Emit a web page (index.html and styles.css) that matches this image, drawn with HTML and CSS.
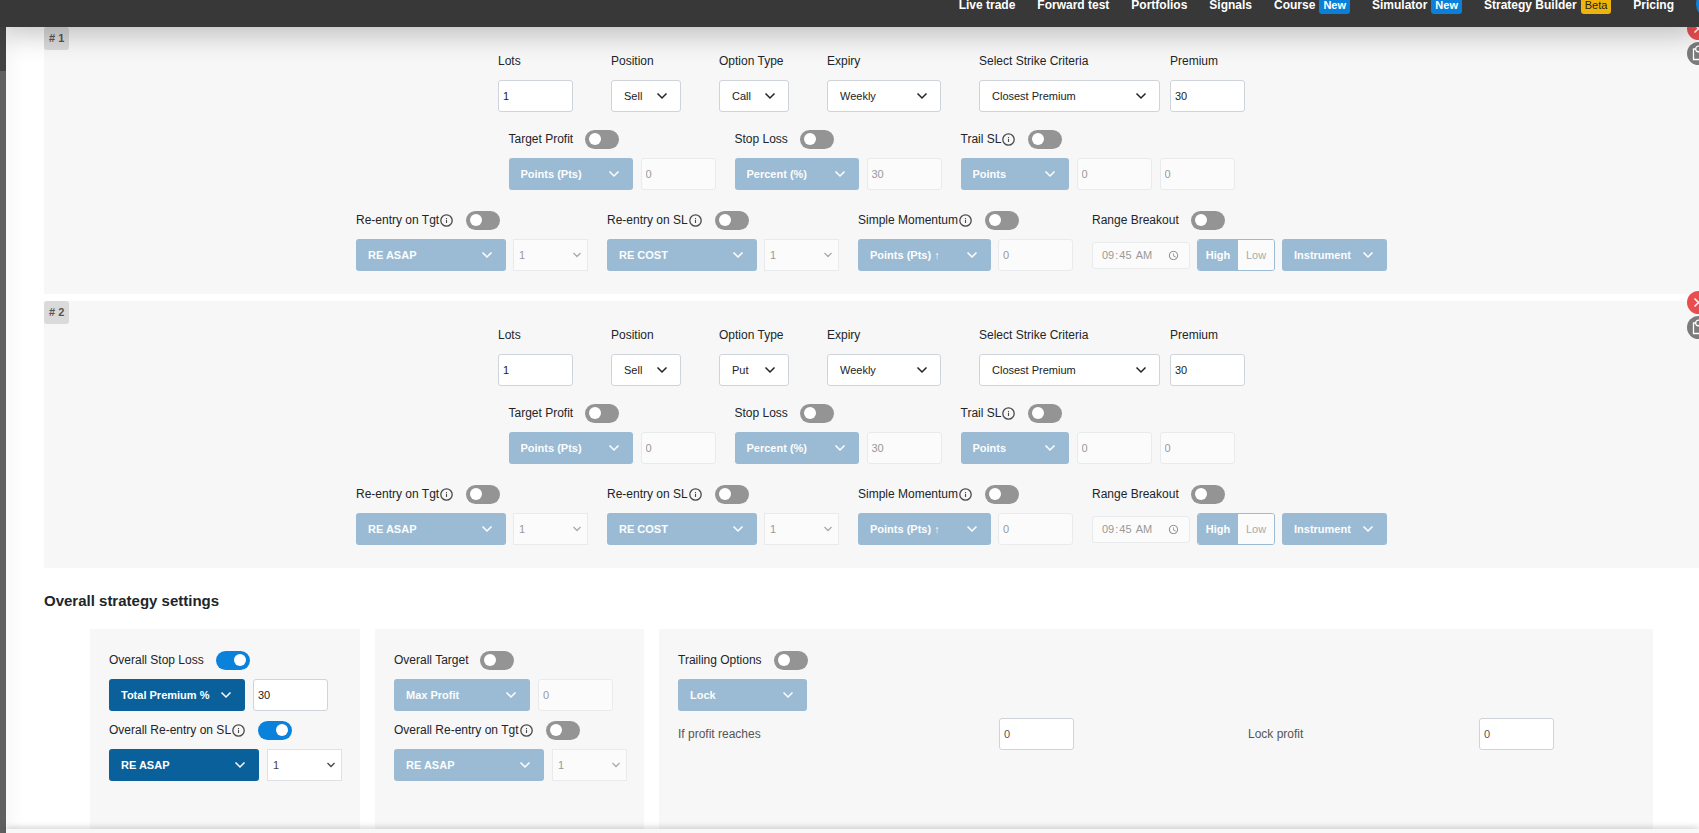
FILE: index.html
```html
<!DOCTYPE html>
<html lang="en">
<head>
<meta charset="utf-8">
<title>Strategy legs</title>
<link rel="stylesheet" href="styles.css">
</head>
<body>
<svg width="0" height="0" class="defs" aria-hidden="true">
  <symbol id="info" viewBox="0 0 13 13"><circle cx="6.5" cy="6.5" r="5.7" fill="none" stroke="#4a4a4a" stroke-width="1.3"/><path d="M6.5 5.8v3.2M6.5 3.9v1.1" stroke="#4a4a4a" stroke-width="1.1"/></symbol>
  <symbol id="cross" viewBox="0 0 23 23"><path d="M7.5 7.5l8 8M15.5 7.5l-8 8" stroke="#fff" stroke-width="1.5"/></symbol>
  <symbol id="copy" viewBox="0 0 23 23"><path d="M9 7H6.5v10.500h10V7H14" fill="none" stroke="#fff" stroke-width="1.3"/><circle cx="11.500" cy="7" r="2.800" fill="none" stroke="#fff" stroke-width="1.200"/><path d="M9.500 9.500h4" stroke="#fff" stroke-width="1.200"/></symbol>
</svg>
<header class="topbar">
  <nav class="nav">
    <a href="#">Live trade</a>
    <a href="#">Forward test</a>
    <a href="#">Portfolios</a>
    <a href="#">Signals</a>
    <a href="#">Course <span class="tag">New</span></a>
    <a href="#">Simulator <span class="tag">New</span></a>
    <a href="#">Strategy Builder <span class="tag beta">Beta</span></a>
    <a href="#">Pricing</a>
    <button class="avatar" aria-label="Account"></button>
  </nav>
</header>
<div class="shell">
  <aside class="backdrop"></aside>
  <main class="page">
    <section class="leg">
      <span class="number"># 1</span>
      <div class="actions"><button class="round remove" aria-label="Remove leg"><svg><use href="#cross"/></svg></button><button class="round" aria-label="Copy leg"><svg><use href="#copy"/></svg></button></div>
      <div class="row main-row">
        <div class="field"><label for="lots1">Lots</label><input class="box" id="lots1" value="1"></div>
        <div class="field"><label for="pos1">Position</label><select class="pick w-s" id="pos1"><option>Sell</option></select></div>
        <div class="field"><label for="opt1">Option Type</label><select class="pick w-s" id="opt1"><option>Call</option></select></div>
        <div class="field"><label for="exp1">Expiry</label><select class="pick w-m" id="exp1"><option>Weekly</option></select></div>
        <div class="pair">
          <div class="field"><label for="crit1">Select Strike Criteria</label><select class="pick w-l" id="crit1"><option>Closest Premium</option></select></div>
          <div class="field"><label for="prem1">Premium</label><input class="box" id="prem1" value="30"></div>
        </div>
      </div>
      <div class="row target-row">
        <div class="group"><div class="head"><label for="tp1">Target Profit</label><input type="checkbox" class="toggle" id="tp1"></div>
          <div class="controls"><select class="pick blue w-124" aria-label="Target unit" disabled><option>Points (Pts)</option></select><input class="box" aria-label="Target value" value="0" disabled></div></div>
        <div class="group"><div class="head"><label for="sl1">Stop Loss</label><input type="checkbox" class="toggle" id="sl1"></div>
          <div class="controls"><select class="pick blue w-124" aria-label="Stop loss unit" disabled><option>Percent (%)</option></select><input class="box" aria-label="Stop loss value" value="30" disabled></div></div>
        <div class="group"><div class="head"><label for="tsl1">Trail SL<svg class="info"><use href="#info"/></svg></label><input type="checkbox" class="toggle" id="tsl1"></div>
          <div class="controls"><select class="pick blue w-108" aria-label="Trail unit" disabled><option>Points</option></select><input class="box" aria-label="Trail move" value="0" disabled><input class="box" aria-label="Trail step" value="0" disabled></div></div>
      </div>
      <div class="row entry-row">
        <div class="group"><div class="head"><label for="rt1">Re-entry on Tgt<svg class="info"><use href="#info"/></svg></label><input type="checkbox" class="toggle" id="rt1"></div>
          <div class="controls"><select class="pick blue w-150" aria-label="Re-entry mode" disabled><option>RE ASAP</option></select><select class="count" aria-label="Re-entry count" disabled><option>1</option></select></div></div>
        <div class="group"><div class="head"><label for="rs1">Re-entry on SL<svg class="info"><use href="#info"/></svg></label><input type="checkbox" class="toggle" id="rs1"></div>
          <div class="controls"><select class="pick blue w-150" aria-label="SL re-entry mode" disabled><option>RE COST</option></select><select class="count" aria-label="SL re-entry count" disabled><option>1</option></select></div></div>
        <div class="group"><div class="head"><label for="sm1">Simple Momentum<svg class="info"><use href="#info"/></svg></label><input type="checkbox" class="toggle" id="sm1"></div>
          <div class="controls"><select class="pick blue w-133" aria-label="Momentum unit" disabled><option>Points (Pts) ↑</option></select><input class="box" aria-label="Momentum value" value="0" disabled></div></div>
        <div class="group"><div class="head"><label for="rb1">Range Breakout</label><input type="checkbox" class="toggle" id="rb1"></div>
          <div class="controls"><input type="time" class="time" aria-label="Range end time" value="09:45" disabled><div class="segment"><button class="active" disabled>High</button><button disabled>Low</button></div><select class="pick blue w-105" aria-label="Breakout source" disabled><option>Instrument</option></select></div></div>
      </div>
    </section>
    <section class="leg">
      <span class="number"># 2</span>
      <div class="actions"><button class="round remove" aria-label="Remove leg"><svg><use href="#cross"/></svg></button><button class="round" aria-label="Copy leg"><svg><use href="#copy"/></svg></button></div>
      <div class="row main-row">
        <div class="field"><label for="lots2">Lots</label><input class="box" id="lots2" value="1"></div>
        <div class="field"><label for="pos2">Position</label><select class="pick w-s" id="pos2"><option>Sell</option></select></div>
        <div class="field"><label for="opt2">Option Type</label><select class="pick w-s" id="opt2"><option>Put</option></select></div>
        <div class="field"><label for="exp2">Expiry</label><select class="pick w-m" id="exp2"><option>Weekly</option></select></div>
        <div class="pair">
          <div class="field"><label for="crit2">Select Strike Criteria</label><select class="pick w-l" id="crit2"><option>Closest Premium</option></select></div>
          <div class="field"><label for="prem2">Premium</label><input class="box" id="prem2" value="30"></div>
        </div>
      </div>
      <div class="row target-row">
        <div class="group"><div class="head"><label for="tp2">Target Profit</label><input type="checkbox" class="toggle" id="tp2"></div>
          <div class="controls"><select class="pick blue w-124" aria-label="Target unit" disabled><option>Points (Pts)</option></select><input class="box" aria-label="Target value" value="0" disabled></div></div>
        <div class="group"><div class="head"><label for="sl2">Stop Loss</label><input type="checkbox" class="toggle" id="sl2"></div>
          <div class="controls"><select class="pick blue w-124" aria-label="Stop loss unit" disabled><option>Percent (%)</option></select><input class="box" aria-label="Stop loss value" value="30" disabled></div></div>
        <div class="group"><div class="head"><label for="tsl2">Trail SL<svg class="info"><use href="#info"/></svg></label><input type="checkbox" class="toggle" id="tsl2"></div>
          <div class="controls"><select class="pick blue w-108" aria-label="Trail unit" disabled><option>Points</option></select><input class="box" aria-label="Trail move" value="0" disabled><input class="box" aria-label="Trail step" value="0" disabled></div></div>
      </div>
      <div class="row entry-row">
        <div class="group"><div class="head"><label for="rt2">Re-entry on Tgt<svg class="info"><use href="#info"/></svg></label><input type="checkbox" class="toggle" id="rt2"></div>
          <div class="controls"><select class="pick blue w-150" aria-label="Re-entry mode" disabled><option>RE ASAP</option></select><select class="count" aria-label="Re-entry count" disabled><option>1</option></select></div></div>
        <div class="group"><div class="head"><label for="rs2">Re-entry on SL<svg class="info"><use href="#info"/></svg></label><input type="checkbox" class="toggle" id="rs2"></div>
          <div class="controls"><select class="pick blue w-150" aria-label="SL re-entry mode" disabled><option>RE COST</option></select><select class="count" aria-label="SL re-entry count" disabled><option>1</option></select></div></div>
        <div class="group"><div class="head"><label for="sm2">Simple Momentum<svg class="info"><use href="#info"/></svg></label><input type="checkbox" class="toggle" id="sm2"></div>
          <div class="controls"><select class="pick blue w-133" aria-label="Momentum unit" disabled><option>Points (Pts) ↑</option></select><input class="box" aria-label="Momentum value" value="0" disabled></div></div>
        <div class="group"><div class="head"><label for="rb2">Range Breakout</label><input type="checkbox" class="toggle" id="rb2"></div>
          <div class="controls"><input type="time" class="time" aria-label="Range end time" value="09:45" disabled><div class="segment"><button class="active" disabled>High</button><button disabled>Low</button></div><select class="pick blue w-105" aria-label="Breakout source" disabled><option>Instrument</option></select></div></div>
      </div>
    </section>
    <h2 class="title">Overall strategy settings</h2>
    <div class="cards">
      <section class="card">
        <div class="group"><div class="head"><label for="osl">Overall Stop Loss</label><input type="checkbox" class="toggle" id="osl" checked></div>
          <div class="controls"><select class="pick blue w-136" aria-label="Overall stop loss unit"><option>Total Premium %</option></select><input class="box" aria-label="Overall stop loss value" value="30"></div></div>
        <div class="group"><div class="head"><label for="ors">Overall Re-entry on SL<svg class="info"><use href="#info"/></svg></label><input type="checkbox" class="toggle" id="ors" checked></div>
          <div class="controls"><select class="pick blue w-150" aria-label="Overall SL re-entry mode"><option>RE ASAP</option></select><select class="count" aria-label="Overall SL re-entry count"><option>1</option></select></div></div>
      </section>
      <section class="card">
        <div class="group"><div class="head"><label for="ot">Overall Target</label><input type="checkbox" class="toggle" id="ot"></div>
          <div class="controls"><select class="pick blue w-136" aria-label="Overall target unit" disabled><option>Max Profit</option></select><input class="box" aria-label="Overall target value" value="0" disabled></div></div>
        <div class="group"><div class="head"><label for="ort">Overall Re-entry on Tgt<svg class="info"><use href="#info"/></svg></label><input type="checkbox" class="toggle" id="ort"></div>
          <div class="controls"><select class="pick blue w-150" aria-label="Overall target re-entry mode" disabled><option>RE ASAP</option></select><select class="count" aria-label="Overall target re-entry count" disabled><option>1</option></select></div></div>
      </section>
      <section class="card wide">
        <div class="group"><div class="head"><label for="tro">Trailing Options</label><input type="checkbox" class="toggle" id="tro"></div>
          <div class="controls"><select class="pick blue w-129" aria-label="Trailing mode" disabled><option>Lock</option></select></div></div>
        <div class="lock"><label for="reach">If profit reaches</label><input class="box" id="reach" value="0"><label for="lockp">Lock profit</label><input class="box" id="lockp" value="0"></div>
      </section>
    </div>
    <footer class="bottombar"></footer>
  </main>
</div>
</body>
</html>
```
FILE: styles.css
```css
* { box-sizing: border-box; }
body {
  margin: 0;
  height: 100vh;
  overflow: hidden;
  display: flex;
  flex-direction: column;
  font: 12px/20px "Liberation Sans", Arial, sans-serif;
  color: #212529;
  background: #fff;
}
button, input, select { font: 11px/16px "Liberation Sans", Arial, sans-serif; margin: 0; }
.defs { position: absolute; }

.topbar {
  position: relative;
  z-index: 2;
  flex: none;
  height: 27px;
  background: #383838;
  box-shadow: 0 4px 30px rgba(0, 0, 0, .3);
}
.nav {
  height: 100%;
  overflow: hidden;
  display: flex;
  justify-content: flex-end;
  align-items: flex-start;
  gap: 22px;
}
.nav a {
  margin-top: -4px;
  display: flex;
  align-items: center;
  gap: 4px;
  color: #fff;
  font-weight: bold;
  line-height: 18px;
  text-decoration: none;
  white-space: nowrap;
}
.tag {
  padding: 0 4px;
  border-radius: 3px;
  background: #0a80d8;
  font-size: 11px;
}
.beta { background: #efb40c; color: #222; font-weight: normal; }
.avatar {
  flex: none;
  width: 30px;
  height: 30px;
  margin: -11px -27px 0 0;
  border: 0;
  border-radius: 50%;
  background: #0a80d8;
}

.shell { flex: 1; min-height: 0; display: flex; }
.backdrop {
  position: relative;
  z-index: 1;
  flex: none;
  width: 6px;
  background: linear-gradient(#434343 44px, #606060 44px);
  box-shadow: 0 0 20px rgba(0, 0, 0, .12);
}
.page {
  flex: 1;
  min-width: 0;
  display: flex;
  flex-direction: column;
}

.leg {
  position: relative;
  flex: none;
  margin: 0 0 7px 38px;
  padding: 24px 0 23px;
  background: #f7f7f7;
}
.number {
  position: absolute;
  top: 0;
  left: 0;
  padding: 0 5px;
  line-height: 23px;
  font-size: 11px;
  font-weight: bold;
  color: #555;
  background: #dadada;
  border-radius: 3px;
}
.actions {
  position: absolute;
  top: -10px;
  right: -11px;
  display: flex;
  flex-direction: column;
  gap: 2px;
}
.round {
  width: 23px;
  height: 23px;
  padding: 0;
  border: 0;
  border-radius: 50%;
  background: #7b7b7b;
}
.round svg { display: block; width: 23px; height: 23px; }
.remove { background: #ea4d4f; }

.row { display: flex; justify-content: center; gap: 19px; }
.main-row { gap: 38px; }
.pair { display: flex; gap: 10px; }
.field { display: flex; flex-direction: column; gap: 9px; }
.field label { white-space: nowrap; }
.target-row { margin-top: 17px; }
.entry-row { margin-top: 20px; }
.group { display: flex; flex-direction: column; gap: 9px; }
.head { display: flex; align-items: center; gap: 12px; height: 20px; }
.head label { display: flex; align-items: center; white-space: nowrap; }
.info { flex: none; width: 13px; height: 13px; margin: 1px 1px 0; }
.controls { display: flex; align-items: center; gap: 7px; }
.target-row .controls, .card .controls { gap: 8px; }

.toggle {
  appearance: none;
  width: 34px;
  height: 19px;
  border-radius: 10px;
  background: #949494;
  display: flex;
  align-items: center;
  padding: 0 4px;
}
.toggle::before {
  content: "";
  width: 12px;
  height: 12px;
  border-radius: 50%;
  background: #fff;
}
.toggle:checked { background: #0a82dc; justify-content: flex-end; }

.box {
  width: 75px;
  height: 32px;
  padding: 0 4px;
  border: 1px solid #ced4da;
  border-radius: 3px;
  background: #fff;
  color: #222;
}
.box:disabled, .count:disabled { background-color: #fbfbfb; border-color: #e8eaec; color: #999; opacity: 1; }

.pick {
  appearance: none;
  height: 32px;
  padding: 0 24px 0 12px;
  border: 1px solid #ced4da;
  border-radius: 3px;
  color: #222;
  background: #fff url("data:image/svg+xml,%3Csvg xmlns='http://www.w3.org/2000/svg' width='12' height='8'%3E%3Cpath d='M1.500 1.500L6 6l4.500-4.500' fill='none' stroke='%23222' stroke-width='1.500'/%3E%3C/svg%3E") no-repeat right 12px center;
}
.blue {
  border: 0;
  color: #fff;
  font-weight: bold;
  background: #0a609b url("data:image/svg+xml,%3Csvg xmlns='http://www.w3.org/2000/svg' width='12' height='8'%3E%3Cpath d='M1.500 1.500L6 6l4.500-4.500' fill='none' stroke='%23fff' stroke-width='1.500'/%3E%3C/svg%3E") no-repeat right 13px center;
}
.blue:disabled { background-color: #9abbd3; color: #fcfdfe; opacity: 1; }
.w-s { width: 70px; }
.w-m { width: 114px; }
.w-l { width: 181px; }
.w-105 { width: 105px; }
.w-108 { width: 108px; }
.w-124 { width: 124px; }
.w-129 { width: 129px; }
.w-133 { width: 133px; }
.w-136 { width: 136px; }
.w-150 { width: 150px; }
.count {
  appearance: none;
  width: 75px;
  height: 32px;
  padding: 0 20px 0 5px;
  border: 1px solid #dfe2e5;
  border-radius: 0;
  color: #444;
  background: #fff url("data:image/svg+xml,%3Csvg xmlns='http://www.w3.org/2000/svg' width='10' height='6'%3E%3Cpath d='M1.500 1L5 4.500 8.500 1' fill='none' stroke='%23444' stroke-width='1.300'/%3E%3C/svg%3E") no-repeat right 5px center;
}
.count:disabled { background-image: url("data:image/svg+xml,%3Csvg xmlns='http://www.w3.org/2000/svg' width='10' height='6'%3E%3Cpath d='M1.500 1L5 4.500 8.500 1' fill='none' stroke='%23aaa' stroke-width='1.300'/%3E%3C/svg%3E"); }

.time {
  width: 98px;
  height: 27px;
  padding: 0 8px;
  border: 1px solid #e8eaec;
  border-radius: 3px;
  background: #fbfbfb;
  color: #999;
}
.time::-webkit-calendar-picker-indicator { display: block; visibility: visible; opacity: .45; width: 11px; height: 11px; padding: 0; margin: 0 2px 0 0; }
.segment {
  display: flex;
  height: 32px;
  border: 1px solid #9abbd3;
  border-radius: 3px;
  overflow: hidden;
}
.segment button { width: 36px; padding: 0; border: 0; background: #fbfbfb; color: #aaa; }
.segment .active { width: 40px; background: #9abbd3; color: #fff; font-weight: bold; }

.title { flex: none; margin: 16px 0 18px 38px; font-size: 15px; line-height: 20px; }
.cards {
  flex: 1;
  min-height: 0;
  margin: 0 46px 0 84px;
  display: grid;
  grid-template-columns: 270fr 269fr 994fr;
  gap: 15px;
}
.card {
  padding: 21px 0 0 19px;
  display: flex;
  flex-direction: column;
  gap: 9px;
  background: #f7f7f7;
}
.wide { gap: 7px; padding-right: 19px; }
.lock {
  display: grid;
  grid-template-columns: 321fr 249fr 231fr 155fr;
  align-items: center;
  color: #555;
}
.lock .box { color: #555; }
.bottombar {
  position: relative;
  z-index: 1;
  flex: none;
  height: 4px;
  background: #f8f8f8;
  box-shadow: 0 -1px 6px rgba(0, 0, 0, .25);
}
```
